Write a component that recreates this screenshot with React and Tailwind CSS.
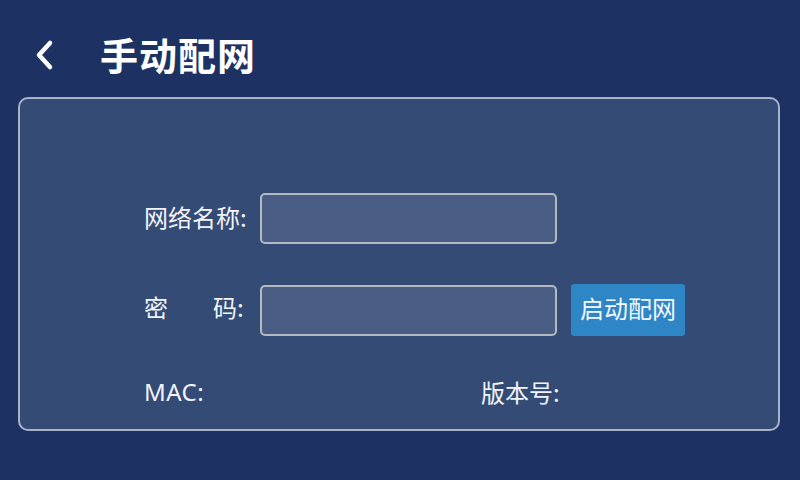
import React from "react";

const font = { fontFamily: '"Noto Sans CJK SC", "Noto Sans", sans-serif' };
const latin = { fontFamily: '"Noto Sans", "Noto Sans CJK SC", sans-serif' };

export default function App() {
  return (
    <div
      className="w-[800px] h-[480px] bg-[#1d3263] flex flex-col text-white"
      style={font}
    >
      <div className="h-[97px] pt-[10px] flex items-center pl-[35px] shrink-0">
        <svg width="20" height="32" viewBox="0 0 20 32" className="shrink-0 mt-[2px]">
          <path
            d="M15 4 L4 16 L15 28"
            fill="none"
            stroke="white"
            strokeWidth="4.5"
            strokeLinecap="round"
            strokeLinejoin="round"
          />
        </svg>
        <div className="ml-[45px] text-[38px] font-bold leading-none tracking-[1px]">
          手动配网
        </div>
      </div>
      <div className="ml-[18px] w-[762px] h-[334px] border-2 border-[#a9b3c8] rounded-[10px] bg-[#344b76] pl-[124px] flex flex-col">
        <div className="mt-[94px] flex items-center">
          <div className="w-[116px] text-[24px] text-[#f2f4f8] leading-none mb-[4px]">网络名称:</div>
          <div className="w-[297px] h-[51px] border-2 border-[#b4b8c0] rounded-[5px] bg-[#4a5d85]" />
        </div>
        <div className="mt-[40px] flex items-center">
          <div className="w-[116px] text-[24px] text-[#f2f4f8] leading-none flex mb-[6px]">
            <span>密</span>
            <span className="ml-[45px]">码:</span>
          </div>
          <div className="w-[297px] h-[51px] border-2 border-[#b4b8c0] rounded-[5px] bg-[#4a5d85]" />
          <div className="ml-[14px] w-[114px] h-[52px] rounded-[3px] bg-[#2e86c6] flex items-center justify-center text-[24px] leading-none text-[#f4f7fb] pb-[4px]">
            启动配网
          </div>
        </div>
        <div className="mt-[41px] flex items-center h-[30px] text-[24px] text-[#f2f4f8] leading-none">
          <div className="w-[337px] tracking-[0.5px]" style={latin}>MAC:</div>
          <div>版本号:</div>
        </div>
      </div>
    </div>
  );
}
